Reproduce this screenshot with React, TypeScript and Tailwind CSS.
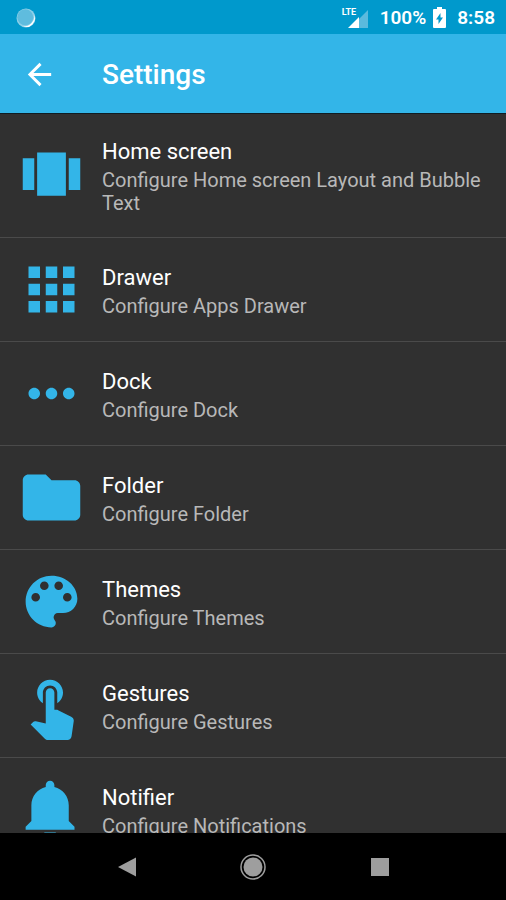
import type { ReactNode } from "react";

interface SettingsItem {
  id: string;
  title: string;
  summary: string;
  icon: ReactNode;
}

const ITEMS: SettingsItem[] = [
  {
    id: "home",
    title: "Home screen",
    summary: "Configure Home screen Layout and Bubble Text",
    icon: <path d="M7 19h10V4H7v15zm-5-2h4V6H2v11zM18 6v11h4V6h-4z" />,
  },
  {
    id: "drawer",
    title: "Drawer",
    summary: "Configure Apps Drawer",
    icon: (
      <path d="M4 8h4V4H4v4zm6 12h4v-4h-4v4zm-6 0h4v-4H4v4zm0-6h4v-4H4v4zm6 0h4v-4h-4v4zm6-10v4h4V4h-4zm-6 4h4V4h-4v4zm6 6h4v-4h-4v4zm0 6h4v-4h-4v4z" />
    ),
  },
  {
    id: "dock",
    title: "Dock",
    summary: "Configure Dock",
    icon: (
      <path d="M6 10c-1.1 0-2 .9-2 2s.9 2 2 2 2-.9 2-2-.9-2-2-2zm12 0c-1.1 0-2 .9-2 2s.9 2 2 2 2-.9 2-2-.9-2-2-2zm-6 0c-1.1 0-2 .9-2 2s.9 2 2 2 2-.9 2-2-.9-2-2-2z" />
    ),
  },
  {
    id: "folder",
    title: "Folder",
    summary: "Configure Folder",
    icon: (
      <path d="M10 4H4c-1.1 0-1.99.9-1.99 2L2 18c0 1.1.9 2 2 2h16c1.1 0 2-.9 2-2V8c0-1.1-.9-2-2-2h-8l-2-2z" />
    ),
  },
  {
    id: "themes",
    title: "Themes",
    summary: "Configure Themes",
    icon: (
      <path d="M12 3c-4.97 0-9 4.03-9 9s4.03 9 9 9c.83 0 1.5-.67 1.5-1.5 0-.39-.15-.74-.39-1.01-.23-.26-.38-.61-.38-.99 0-.83.67-1.5 1.5-1.5H16c2.76 0 5-2.24 5-5 0-4.42-4.03-8-9-8zm-5.5 9c-.83 0-1.5-.67-1.5-1.5S5.67 9 6.5 9 8 9.67 8 10.5 7.33 12 6.5 12zm3-4C8.67 8 8 7.33 8 6.5S8.67 5 9.5 5s1.5.67 1.5 1.5S10.33 8 9.5 8zm5 0c-.83 0-1.5-.67-1.5-1.5S13.67 5 14.5 5s1.5.67 1.5 1.5S15.33 8 14.5 8zm3 4c-.83 0-1.5-.67-1.5-1.5S16.67 9 17.5 9s1.5.67 1.5 1.5-.67 1.5-1.5 1.5z" />
    ),
  },
  {
    id: "gestures",
    title: "Gestures",
    summary: "Configure Gestures",
    icon: (
      <path d="M9 11.24V7.5C9 6.12 10.12 5 11.5 5S14 6.12 14 7.5v3.74c1.21-.81 2-2.18 2-3.74C16 5.01 13.99 3 11.5 3S7 5.01 7 7.5c0 1.56.79 2.93 2 3.74zm9.84 4.63l-4.54-2.26c-.17-.07-.35-.11-.54-.11H13v-6c0-.83-.67-1.5-1.5-1.5S10 6.67 10 7.5v10.74l-3.43-.72c-.08-.01-.15-.03-.24-.03-.31 0-.59.13-.79.33l-.79.8 4.94 4.94c.27.27.65.44 1.06.44h6.79c.75 0 1.33-.55 1.44-1.28l.75-5.27c.01-.07.02-.14.02-.2 0-.62-.38-1.16-.91-1.38z" />
    ),
  },
  {
    id: "notifier",
    title: "Notifier",
    summary: "Configure Notifications",
    icon: (
      <path d="M11.5 22c1.1 0 2-.9 2-2h-4c0 1.1.9 2 2 2zm6.5-6v-5.5c0-3.07-2.13-5.64-5-6.32V3.5c0-.83-.67-1.5-1.5-1.5S10 2.67 10 3.5v.68c-2.87.68-5 3.25-5 6.32V16l-2 2v1h17v-1l-2-2z" />
    ),
  },
];

function StatusBar() {
  return (
    <div className="flex h-[34px] flex-none items-center justify-between bg-[#0099cc] pl-4 pr-[11px] pt-px text-[19px] leading-6 font-semibold text-white">
      <svg viewBox="0 0 20 20" className="h-5 w-5" aria-hidden>
        <circle cx="10" cy="10" r="9.5" fill="#8fd0e8" />
        <path d="M18.5 7a9 9 0 0 1-11.5 11.5A11 11 0 0 0 18.5 7z" fill="#fff" />
        <circle cx="9.3" cy="9.3" r="8" fill="#5fbcde" />
      </svg>

      <div className="flex items-center">
        <div className="relative mr-3 h-5 w-[26px]">
          <span className="absolute left-0 top-0 text-[9px] leading-[9px] font-bold">
            LTE
          </span>
          <svg
            viewBox="0 0 20 20"
            className="absolute right-0 top-0 h-5 w-5"
            aria-hidden
          >
            <path d="M20 2v18H10V12z" fill="#5bbadd" />
            <path d="M11 9v11H0z" fill="#fff" />
          </svg>
        </div>
        <span>100%</span>
        <svg viewBox="0 0 13 21" className="mx-[7px] h-[21px] w-[13px]" aria-hidden>
          <path
            d="M4 0h5v2h3a1 1 0 0 1 1 1v17a1 1 0 0 1-1 1H1a1 1 0 0 1-1-1V3a1 1 0 0 1 1-1h3z"
            fill="#fff"
          />
          <path d="M7.5 6v4.5H10L5.5 17v-4.5H3z" fill="#0099cc" />
        </svg>
        <span className="ml-1">8:58</span>
      </div>
    </div>
  );
}

function Toolbar() {
  return (
    <header className="flex h-20 flex-none items-center border-b border-[#101c22] bg-[#33b5e8] pl-[22px] pt-[2px]">
      <button type="button" aria-label="Back" className="text-white">
        <svg viewBox="0 0 24 24" className="h-[35px] w-[35px]" fill="currentColor">
          <path d="M20 11H7.83l5.59-5.59L12 4l-8 8 8 8 1.41-1.41L7.83 13H20v-2z" />
        </svg>
      </button>
      <h1 className="ml-[45px] text-[28px] leading-8 font-medium text-white">
        Settings
      </h1>
    </header>
  );
}

function SettingsRow({ item }: { item: SettingsItem }) {
  return (
    <li className="border-b border-[#4a4a4a]">
      <a href={`#${item.id}`} className="flex items-center py-[17px] pl-[17px] pr-6">
        <svg
          viewBox="0 0 24 24"
          className="h-[69px] w-[69px] flex-none"
          fill="#33b5e8"
          aria-hidden
        >
          {item.icon}
        </svg>
        <div className="ml-4 min-w-0 pt-[6px] pb-[5px]">
          <div className="text-[22px] leading-[29px] text-white">{item.title}</div>
          <div className="mt-[3px] text-[20px] leading-[23px] text-[#b8b8b8]">
            {item.summary}
          </div>
        </div>
      </a>
    </li>
  );
}

function NavigationBar() {
  return (
    <nav className="flex h-[67px] flex-none items-center bg-black px-[12.5%] text-[#9e9e9e]">
      <button type="button" aria-label="Back" className="flex flex-1 justify-center">
        <svg viewBox="0 0 20 20" className="h-5 w-5" fill="currentColor">
          <path d="M19 .5v19L1 10z" />
        </svg>
      </button>
      <button type="button" aria-label="Home" className="flex flex-1 justify-center">
        <svg viewBox="0 0 26 26" className="h-[26px] w-[26px]">
          <circle cx="13" cy="13" r="12" fill="none" stroke="currentColor" strokeWidth="1.5" />
          <circle cx="13" cy="13" r="9.5" fill="currentColor" />
        </svg>
      </button>
      <button type="button" aria-label="Recent apps" className="flex flex-1 justify-center">
        <span className="h-[18px] w-[18px] bg-current" />
      </button>
    </nav>
  );
}

export default function App() {
  return (
    <div className="flex h-screen flex-col bg-[#303030] font-[Roboto,sans-serif]">
      <StatusBar />
      <Toolbar />
      <main className="min-h-0 flex-1 overflow-y-auto [scrollbar-width:none]">
        <ul>
          {ITEMS.map((item) => (
            <SettingsRow key={item.id} item={item} />
          ))}
        </ul>
      </main>
      <NavigationBar />
    </div>
  );
}
